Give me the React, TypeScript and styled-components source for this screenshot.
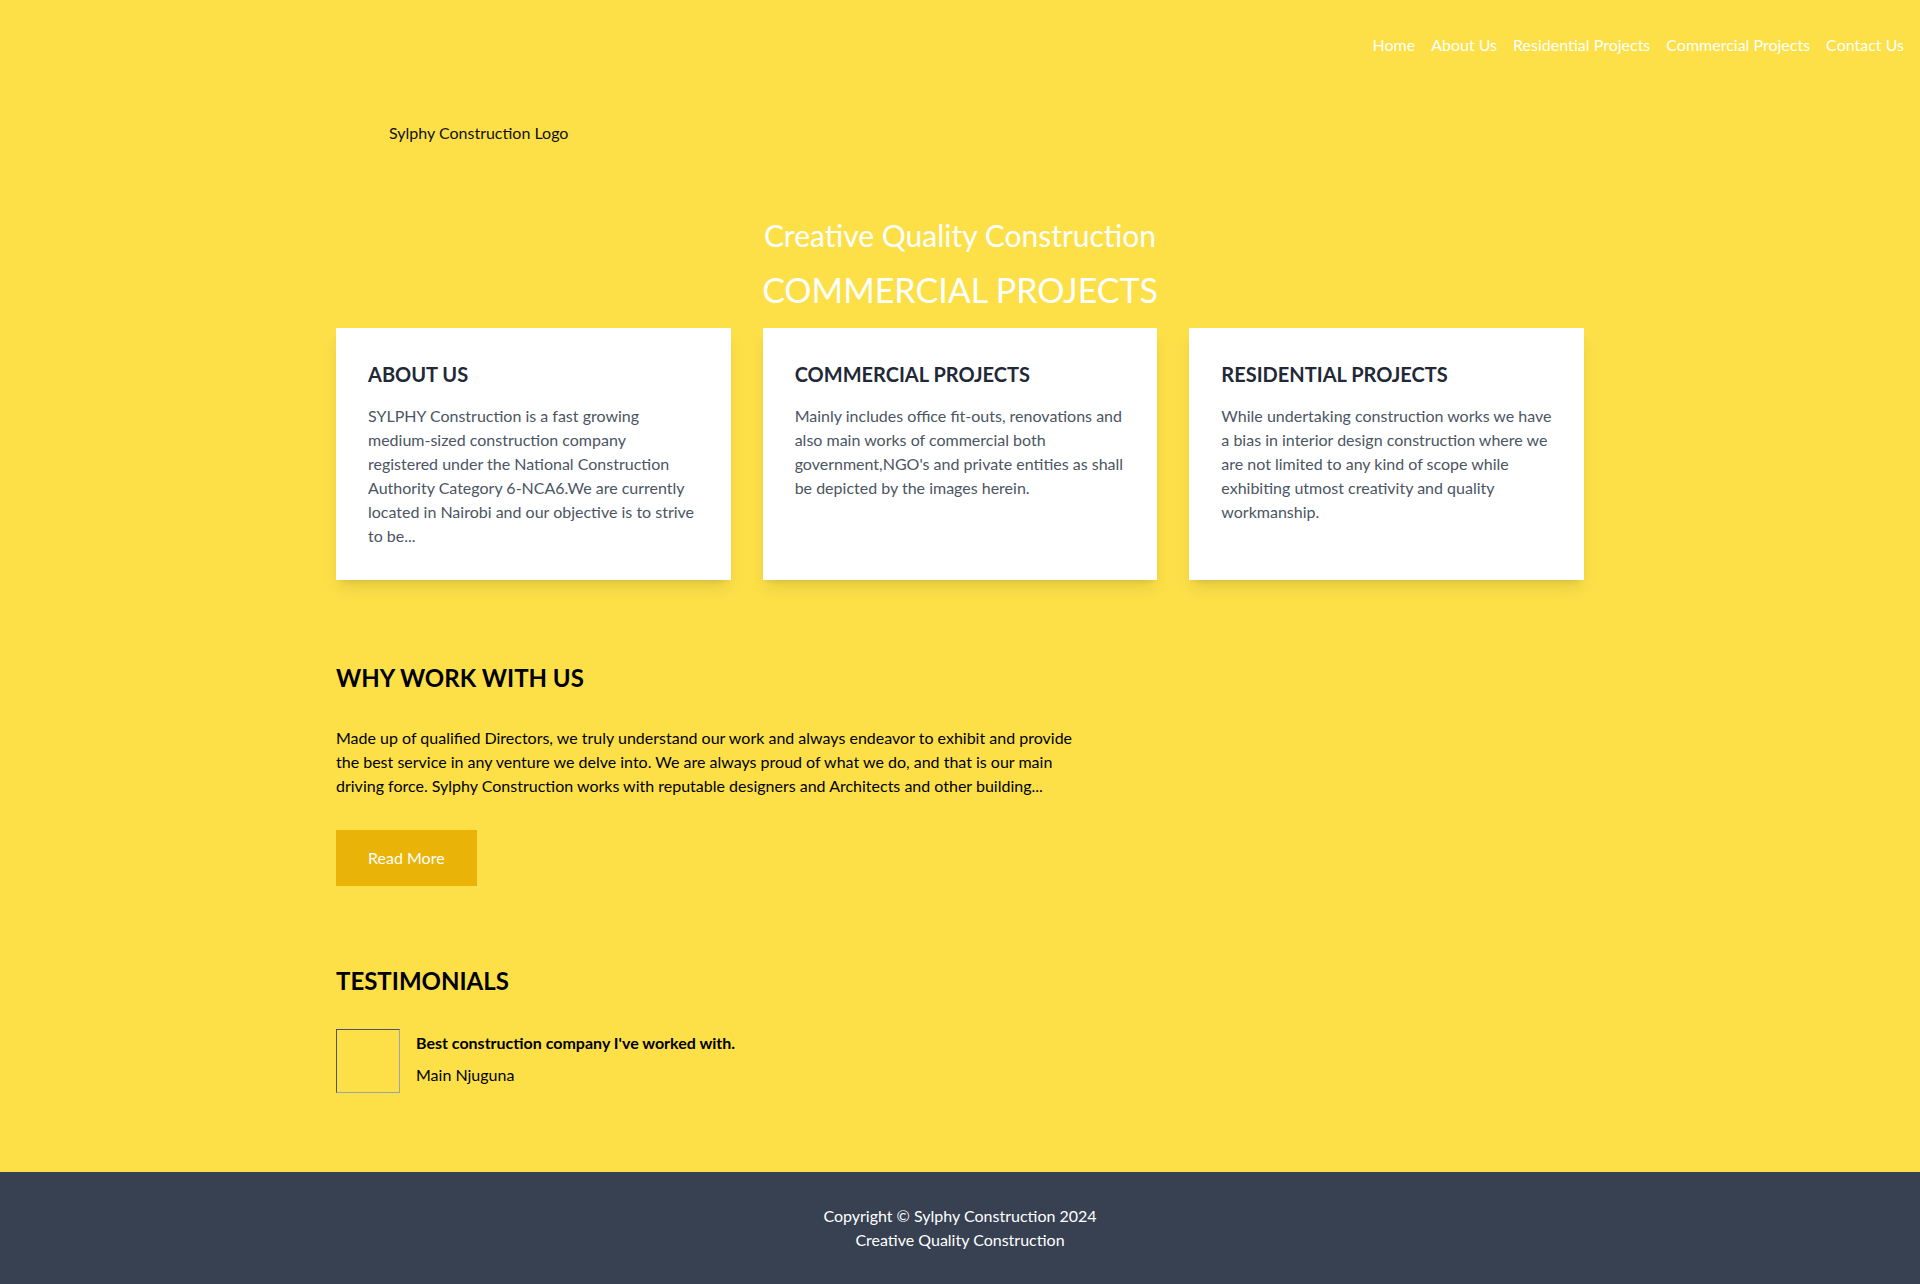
import React from "react";
import styled, { createGlobalStyle } from "styled-components";

const Global = createGlobalStyle`
  * { box-sizing: border-box; }
  html, body { margin: 0; padding: 0; }
  body {
    background: #fde047;
    font-family: Lato, "Segoe UI", "Liberation Sans", sans-serif;
    font-size: 16px;
    line-height: 24px;
    color: #000;
  }
  h1, h2, h3, p { margin: 0; }
`;

const Page = styled.div`
  min-height: 1284px;
  display: flex;
  flex-direction: column;
`;

const Header = styled.header`
  display: flex;
  flex-direction: column;
`;

const Nav = styled.nav`
  display: flex;
  justify-content: flex-end;
  gap: 16px;
  padding: 33px 16px 0 0;
`;

const NavLink = styled.a`
  color: #ffffff;
  text-decoration: none;
  font-size: 16px;
  line-height: 24px;
`;

const Container = styled.div`
  width: 1248px;
  margin: 0 auto;
`;

const Logo = styled.div`
  padding: 64px 0 0 53px;
  font-size: 16px;
  line-height: 24px;
  color: #111;
`;

const Hero = styled.section`
  text-align: center;
  color: #ffffff;
  padding-top: 72px;
`;

const Tagline = styled.h2`
  font-size: 30px;
  line-height: 36px;
  font-weight: 400;
  margin-bottom: 17px;
`;

const HeroTitle = styled.h1`
  font-size: 34px;
  line-height: 40px;
  font-weight: 400;
  margin-bottom: 18px;
`;

const Cards = styled.div`
  display: grid;
  grid-template-columns: repeat(3, 1fr);
  gap: 32px;
`;

const Card = styled.div`
  background: #ffffff;
  padding: 32px;
  min-height: 251px;
  box-shadow: 0 10px 15px -3px rgba(0, 0, 0, 0.1), 0 4px 6px -4px rgba(0, 0, 0, 0.1);
  text-align: left;
`;

const CardTitle = styled.h3`
  font-size: 20px;
  line-height: 28px;
  font-weight: 700;
  color: #1f2937;
  margin-bottom: 16px;
`;

const CardText = styled.p`
  color: #4b5563;
  font-size: 16px;
  line-height: 24px;
`;

const Section = styled.section<{ $top: number }>`
  padding-top: ${(p) => p.$top}px;
`;

const SectionTitle = styled.h2`
  font-size: 24px;
  line-height: 32px;
  font-weight: 700;
  color: #000;
  margin-bottom: 32px;
`;

const Paragraph = styled.p`
  max-width: 750px;
  margin-bottom: 32px;
`;

const Button = styled.button`
  background: #eab308;
  color: #ffffff;
  border: none;
  padding: 16px 32px;
  font-family: inherit;
  font-size: 16px;
  line-height: 24px;
  cursor: pointer;
`;

const Testimonial = styled.div`
  display: flex;
  gap: 16px;
  align-items: flex-start;
`;

const Avatar = styled.div`
  width: 64px;
  height: 64px;
  flex-shrink: 0;
  border: 1px solid;
  border-color: #4b5563 #9ca3af #9ca3af #4b5563;
`;

const Quote = styled.p`
  font-weight: 700;
  padding-top: 2px;
  margin-bottom: 8px;
`;

const Author = styled.p``;

const Footer = styled.footer`
  margin-top: auto;
  background: #374151;
  color: #ffffff;
  text-align: center;
  padding: 32px 0;
`;

export default function App() {
  return (
    <Page>
      <Global />
      <Header>
        <Nav>
          <NavLink href="#">Home</NavLink>
          <NavLink href="#">About Us</NavLink>
          <NavLink href="#">Residential Projects</NavLink>
          <NavLink href="#">Commercial Projects</NavLink>
          <NavLink href="#">Contact Us</NavLink>
        </Nav>
        <Container>
          <Logo>Sylphy Construction Logo</Logo>
        </Container>
      </Header>
      <main>
        <Container>
          <Hero>
            <Tagline>Creative Quality Construction</Tagline>
            <HeroTitle>COMMERCIAL PROJECTS</HeroTitle>
            <Cards>
              <Card>
                <CardTitle>ABOUT US</CardTitle>
                <CardText>
                  SYLPHY Construction is a fast growing medium-sized construction company registered under the
                  National Construction Authority Category 6-NCA6.We are currently located in Nairobi and our
                  objective is to strive to be...
                </CardText>
              </Card>
              <Card>
                <CardTitle>COMMERCIAL PROJECTS</CardTitle>
                <CardText>
                  Mainly includes office fit-outs, renovations and also main works of commercial both
                  government,NGO's and private entities as shall be depicted by the images herein.
                </CardText>
              </Card>
              <Card>
                <CardTitle>RESIDENTIAL PROJECTS</CardTitle>
                <CardText>
                  While undertaking construction works we have a bias in interior design construction where we are
                  not limited to any kind of scope while exhibiting utmost creativity and quality workmanship.
                </CardText>
              </Card>
            </Cards>
          </Hero>
          <Section $top={82}>
            <SectionTitle>WHY WORK WITH US</SectionTitle>
            <Paragraph>
              Made up of qualified Directors, we truly understand our work and always endeavor to exhibit and provide
              the best service in any venture we delve into. We are always proud of what we do, and that is our main
              driving force. Sylphy Construction works with reputable designers and Architects and other building...
            </Paragraph>
            <Button>Read More</Button>
          </Section>
          <Section $top={79}>
            <SectionTitle>TESTIMONIALS</SectionTitle>
            <Testimonial>
              <Avatar />
              <div>
                <Quote>Best construction company I've worked with.</Quote>
                <Author>Main Njuguna</Author>
              </div>
            </Testimonial>
          </Section>
        </Container>
      </main>
      <Footer>
        <p>Copyright © Sylphy Construction 2024</p>
        <p>Creative Quality Construction</p>
      </Footer>
    </Page>
  );
}
